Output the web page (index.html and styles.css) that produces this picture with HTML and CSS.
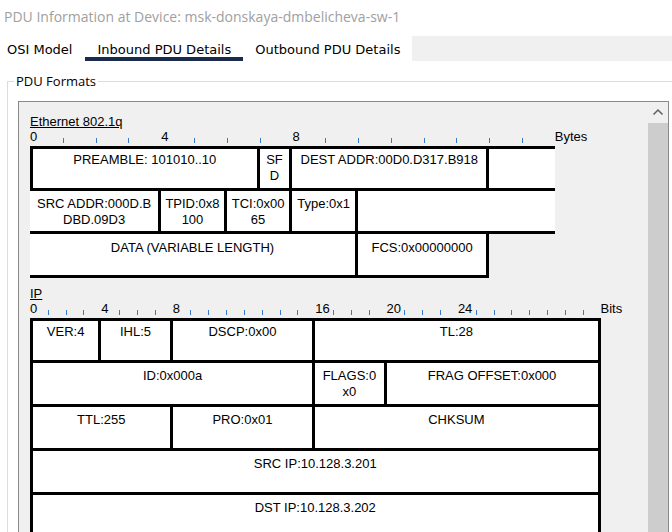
FILE: index.html
```html
<!DOCTYPE html>
<html>
<head>
<meta charset="utf-8">
<title>PDU Information</title>
<link rel="stylesheet" href="styles.css">
</head>
<body>
<div class="window">
  <div class="title">PDU Information at Device: msk-donskaya-dmbelicheva-sw-1</div>
  <div class="tabs">
    <div class="tab tab-first">OSI Model</div>
    <div class="tab active">Inbound PDU Details</div>
    <div class="tab">Outbound PDU Details</div>
    <div class="tab-fill"></div>
  </div>
  <fieldset class="group">
    <legend>PDU Formats</legend>
    <div class="panel">
      <div class="panel-content">
        <section class="pdu-section">
          <div class="sec-title">Ethernet 802.1q</div>
          <div class="ruler eth">
            <span class="rlabel">0</span><i class="tick"></i><i class="tick"></i><i class="tick"></i>
            <span class="rlabel">4</span><i class="tick"></i><i class="tick"></i><i class="tick"></i>
            <span class="rlabel">8</span><i class="tick"></i><i class="tick"></i><i class="tick"></i><i class="tick"></i><i class="tick"></i><i class="tick"></i><i class="tick"></i>
            <span class="unit">Bytes</span>
          </div>
          <div class="pdu eth">
            <div class="cell top first sp7">PREAMBLE: 101010..10</div>
            <div class="cell top sp1">SF<br>D</div>
            <div class="cell top sp6">DEST ADDR:00D0.D317.B918</div>
            <div class="cell top open sp2"></div>

            <div class="cell sp4">SRC ADDR:000D.B<br>DBD.09D3</div>
            <div class="cell sp2">TPID:0x8<br>100</div>
            <div class="cell sp2">TCI:0x00<br>65</div>
            <div class="cell sp2">Type:0x1</div>
            <div class="cell open sp6"></div>

            <div class="cell low sp10">DATA (VARIABLE LENGTH)</div>
            <div class="cell low sp4">FCS:0x00000000</div>
          </div>
        </section>

        <section class="pdu-section ip-section">
          <div class="sec-title">IP</div>
          <div class="ruler ip">
            <span class="rlabel">0</span><i class="tick"></i><i class="tick"></i><i class="tick"></i>
            <span class="rlabel">4</span><i class="tick"></i><i class="tick"></i><i class="tick"></i>
            <span class="rlabel">8</span><i class="tick"></i><i class="tick"></i><i class="tick"></i><i class="tick"></i><i class="tick"></i><i class="tick"></i><i class="tick"></i>
            <span class="rlabel">16</span><i class="tick"></i><i class="tick"></i><i class="tick"></i>
            <span class="rlabel">20</span><i class="tick"></i><i class="tick"></i><i class="tick"></i>
            <span class="rlabel">24</span><i class="tick"></i><i class="tick"></i><i class="tick"></i><i class="tick"></i><i class="tick"></i><i class="tick"></i><i class="tick"></i>
            <span class="unit">Bits</span>
          </div>
          <div class="pdu ip">
            <div class="cell top first sp4">VER:4</div>
            <div class="cell top sp4">IHL:5</div>
            <div class="cell top sp8">DSCP:0x00</div>
            <div class="cell top sp16">TL:28</div>

            <div class="cell first sp16">ID:0x000a</div>
            <div class="cell sp4">FLAGS:0<br>x0</div>
            <div class="cell sp12">FRAG OFFSET:0x000</div>

            <div class="cell first sp8">TTL:255</div>
            <div class="cell sp8">PRO:0x01</div>
            <div class="cell sp16">CHKSUM</div>

            <div class="cell first sp32">SRC IP:10.128.3.201</div>

            <div class="cell first sp32">DST IP:10.128.3.202</div>
          </div>
        </section>
      </div>
      <div class="scrollbar">
        <div class="sb-up">
          <svg width="20" height="21" viewBox="0 0 20 21"><polyline points="5.5,12.5 10,8 14.5,12.5" fill="none" stroke="#606060" stroke-width="1.5"/></svg>
        </div>
        <div class="sb-thumb"></div>
      </div>
    </div>
  </fieldset>
</div>
</body>
</html>
```

FILE: styles.css
```css
html, body {
  margin: 0;
  height: 532px;
  overflow: hidden;
  background: #fff;
}

.window {
  width: 672px;
  height: 532px;
  overflow: hidden;
}

.title {
  font: 14px/20px "Open Sans", sans-serif;
  color: #a0a0a0;
  padding: 7px 0 9px 4px;
  white-space: nowrap;
}

.tabs {
  display: flex;
  height: 25px;
}

.tab {
  font: 13px/15px "DejaVu Sans", sans-serif;
  color: #000;
  padding: 6px 12px 0;
  border-bottom: 4px solid transparent;
  box-sizing: border-box;
  height: 25px;
  white-space: nowrap;
}

.tab-first {
  padding-left: 7px;
  padding-right: 13px;
}

.tab.active {
  border-bottom-color: #1a2b4c;
}

.tab-fill {
  flex: 1;
  background: #f0f0f0;
}

.group {
  margin: 11px 0 0 7px;
  padding: 11px 0 0 10px;
  border: 1px solid #dcdcdc;
  width: 690px;
  height: 480px;
  box-sizing: border-box;
  min-width: 0;
}

.group legend {
  font: 13px/18px "Open Sans", sans-serif;
  color: #000;
  padding: 0 2px;
  margin-left: -4px;
}

.panel {
  display: flex;
  width: 651px;
  height: 440px;
  border: 1px solid #8a8a8a;
  box-sizing: border-box;
  background: #f0f0f0;
}

.panel-content {
  flex: 1;
  padding: 12px 0 0 11px;
  font: 13px "Liberation Sans", Arial, sans-serif;
  color: #000;
  overflow: hidden;
}

.scrollbar {
  width: 20px;
  display: flex;
  flex-direction: column;
}

.sb-up {
  height: 21px;
}

.sb-up svg {
  display: block;
}

.sb-thumb {
  flex: 1;
  background: #cdcdcd;
}

.sec-title {
  line-height: 15px;
  text-decoration: underline;
}

.ip-section {
  margin-top: 8px;
}

.ruler {
  display: grid;
  height: 17px;
}

.ruler.eth {
  grid-template-columns: repeat(16, 32.8px) auto;
}

.ruler.ip {
  grid-template-columns: repeat(32, 17.83px) auto;
}

.rlabel,
.unit {
  line-height: 16px;
  align-self: start;
  white-space: nowrap;
}

.tick {
  width: 1px;
  height: 5px;
  background: #3a7bc8;
  align-self: end;
  justify-self: start;
  margin-bottom: 3px;
}

.pdu {
  display: grid;
}

.pdu.eth {
  grid-template-columns: repeat(16, 32.8px);
  grid-template-rows: 45px 43px 44px;
}

.pdu.ip {
  grid-template-columns: repeat(32, 17.83px);
  grid-template-rows: 45px repeat(4, 44px);
}

.cell {
  box-sizing: border-box;
  background: #fff;
  border-right: 3px solid #000;
  border-bottom: 3px solid #000;
  padding-top: 5px;
  line-height: 16px;
  text-align: center;
  white-space: nowrap;
  overflow: hidden;
}

.cell.top {
  border-top: 3px solid #000;
  padding-top: 3px;
}

.cell.first {
  border-left: 3px solid #000;
}

.cell.open {
  border-right: none;
}

.cell.low {
  padding-top: 6px;
}

.sp1 { grid-column: span 1; }
.sp2 { grid-column: span 2; }
.sp4 { grid-column: span 4; }
.sp6 { grid-column: span 6; }
.sp7 { grid-column: span 7; }
.sp8 { grid-column: span 8; }
.sp10 { grid-column: span 10; }
.sp12 { grid-column: span 12; }
.sp16 { grid-column: span 16; }
.sp32 { grid-column: span 32; }
```
